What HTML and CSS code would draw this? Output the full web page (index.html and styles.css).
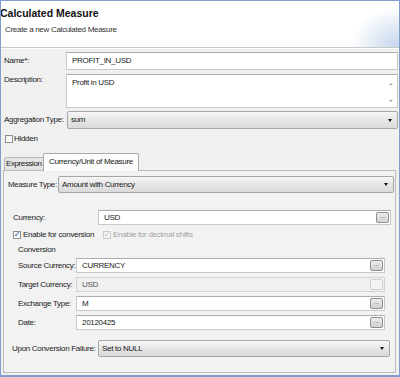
FILE: index.html
```html
<!DOCTYPE html>
<html>
<head>
<meta charset="utf-8">
<link rel="stylesheet" href="styles.css">
</head>
<body>
<div class="frame">
  <header class="banner">
    <h1 class="title">Calculated Measure</h1>
    <p class="subtitle">Create a new Calculated Measure</p>
  </header>
  <div class="content">
    <div class="field">
      <span class="lbl">Name*:</span>
      <div class="input h18">PROFIT_IN_USD</div>
    </div>
    <div class="field top gap4">
      <span class="lbl desc-lbl">Description:</span>
      <div class="input textarea">
        <span class="ta-text">Profit in USD</span>
        <span class="vscroll"><i class="up"></i><i class="down"></i></span>
      </div>
    </div>
    <div class="field gap3">
      <span class="lbl">Aggregation Type:</span>
      <div class="combo h18 agg">sum<i class="arrow"></i></div>
    </div>
    <div class="check-row hidden-row"><span class="cb"></span><span>Hidden</span></div>

    <div class="tabs">
      <div class="tab">Expression</div>
      <div class="tab active">Currency/Unit of Measure</div>
    </div>
    <div class="panel">
      <div class="field">
        <span class="lbl mt-lbl">Measure Type:</span>
        <div class="combo h17">Amount with Currency<i class="arrow"></i></div>
      </div>
      <div class="section">
        <div class="field">
          <span class="lbl cur-lbl">Currency:</span>
          <div class="input h15">USD<span class="btn">...</span></div>
        </div>
        <div class="check-row enable-row">
          <span class="check-item first"><span class="cb checked">✓</span><span>Enable for conversion</span></span>
          <span class="check-item disabled"><span class="cb checked">✓</span><span>Enable for decimal shifts</span></span>
        </div>
        <div class="group">
          <div class="group-title">Conversion</div>
          <div class="field">
            <span class="lbl g-lbl">Source Currency:</span>
            <div class="input h15">CURRENCY<span class="btn">...</span></div>
          </div>
          <div class="field gap4">
            <span class="lbl g-lbl">Target Currency:</span>
            <div class="input h15 disabled-input">USD<span class="btn off"></span></div>
          </div>
          <div class="field gap4">
            <span class="lbl g-lbl">Exchange Type:</span>
            <div class="input h15">M<span class="btn">...</span></div>
          </div>
          <div class="field gap4">
            <span class="lbl g-lbl">Date:</span>
            <div class="input h15">20120425<span class="btn">...</span></div>
          </div>
        </div>
      </div>
      <div class="field fail-row">
        <span class="lbl fail-lbl">Upon Conversion Failure:</span>
        <div class="combo h17">Set to NULL<i class="arrow"></i></div>
      </div>
    </div>
  </div>
</div>
</body>
</html>
```

FILE: styles.css
```css
* { box-sizing: border-box; }
body {
  margin: 0;
  font-family: "Liberation Sans", Arial, sans-serif;
  font-size: 8px;
  letter-spacing: -0.3px;
  color: #1a1a1a;
  background: #fff;
}
.frame {
  width: 400px;
  height: 377px;
  border: 1px solid #7d9fca;
  border-bottom-width: 2px;
  background: #f0f0f0;
  display: flex;
  flex-direction: column;
  overflow: hidden;
}
.banner {
  height: 47px;
  flex: none;
  padding-top: 6px;
  background: radial-gradient(ellipse 48px 40px at 100% 100%, #c4d5ec 0%, rgba(255,255,255,0) 100%), #fff;
  border-bottom: 1px solid #c8c8c8;
  box-shadow: 0 1px 0 #fff;
}
.title {
  margin: 0 0 0 -1px;
  font-size: 10.5px;
  line-height: 12px;
  font-weight: bold;
  letter-spacing: 0;
  color: #111;
}
.subtitle {
  margin: 6px 0 0 4px;
  line-height: 10px;
  color: #333;
}
.content {
  flex: 1;
  display: flex;
  flex-direction: column;
  padding: 4px 1px 0 3px;
  min-height: 0;
}
.field {
  display: flex;
  align-items: center;
  flex: none;
}
.field.top { align-items: flex-start; }
.gap4 { margin-top: 4px; }
.gap3 { margin-top: 3px; }
.lbl {
  width: 62px;
  flex: none;
  line-height: 10px;
  white-space: nowrap;
}
.desc-lbl { margin-top: 1px; }
.input {
  flex: 1;
  display: flex;
  align-items: center;
  background: #fff;
  border: 1px solid #c9c9c9;
  border-top-color: #acacac;
  padding: 0 1px 0 5px;
  line-height: 10px;
  white-space: nowrap;
}
.h18 { height: 18px; }
.h17 { height: 17px; }
.h15 { height: 15px; }
.textarea {
  height: 34px;
  align-items: stretch;
  padding: 2px 1px 0 5px;
}
.ta-text { flex: 1; line-height: 11px; }
.vscroll {
  width: 11px;
  display: flex;
  flex-direction: column;
  justify-content: space-between;
  align-items: center;
  padding: 6px 0 5px;
}
.vscroll i {
  width: 0; height: 0;
  border-left: 2px solid transparent;
  border-right: 2px solid transparent;
}
.vscroll .up { border-bottom: 2px solid #a2a2a2; }
.vscroll .down { border-top: 2px solid #a2a2a2; }
.combo {
  flex: 1;
  display: flex;
  align-items: center;
  padding: 0 5px 0 3px;
  background: linear-gradient(#f6f6f6, #e6e6e6 50%, #dadada);
  border: 1px solid #a6a6a6;
  border-radius: 2px;
  line-height: 10px;
  white-space: nowrap;
}
.combo.agg { margin-left: 1px; }
.arrow {
  margin-left: auto;
  width: 0; height: 0;
  border-left: 2.5px solid transparent;
  border-right: 2.5px solid transparent;
  border-top: 3px solid #111;
}
.check-row {
  display: flex;
  align-items: center;
  flex: none;
  line-height: 10px;
  white-space: nowrap;
}
.hidden-row { margin-top: 3px; height: 13px; padding-left: 1px; }
.cb {
  width: 8px;
  height: 8px;
  flex: none;
  border: 1px solid #8e8f8f;
  background: linear-gradient(#f2f2f2, #fff);
  margin-right: 1px;
  display: flex;
  align-items: center;
  justify-content: center;
  font-size: 8px;
  font-weight: bold;
  letter-spacing: 0;
  line-height: 8px;
  color: #2b4f9b;
  font-family: "DejaVu Sans", sans-serif;
}
.tabs {
  margin-top: 7px;
  height: 18px;
  flex: none;
  display: flex;
  align-items: flex-end;
  position: relative;
  z-index: 1;
}
.tab {
  height: 13px;
  width: 40px;
  padding-left: 1px;
  line-height: 11px;
  letter-spacing: -0.4px;
  background: #e4e4e4;
  border: 1px solid #b8b8b8;
  border-bottom: none;
  border-radius: 2px 0 0 0;
  white-space: nowrap;
  overflow: hidden;
}
.tab.active {
  height: 18px;
  width: 96px;
  margin-left: -1px;
  margin-bottom: -1px;
  padding-left: 5px;
  padding-top: 3px;
  line-height: 10px;
  letter-spacing: -0.3px;
  background: #fcfcfc;
  border-color: #aaaaaa;
  border-radius: 2px 2px 0 0;
}
.panel {
  flex: 1;
  margin: 0 2px 2px -1px;
  border: 1px solid #bcbcbc;
  background: #f2f2f2;
  padding: 5px 1px 0 4px;
  display: flex;
  flex-direction: column;
}
.mt-lbl { width: 50px; }
.section {
  margin-top: 17px;
  padding: 0 3px 0 5px;
}
.cur-lbl { width: 85px; }
.btn {
  margin-left: auto;
  width: 13px;
  height: 11px;
  flex: none;
  border: 1px solid #8f8f8f;
  border-radius: 2px;
  background: linear-gradient(#ececec, #d2d2d2);
  font-size: 6px;
  line-height: 7px;
  letter-spacing: 0;
  text-align: center;
  color: #333;
}
.btn.off {
  border-color: #d0d0d0;
  background: #f4f4f4;
}
.enable-row { margin-top: 5px; height: 10px; }
.check-item { display: flex; align-items: center; }
.check-item.first { width: 90px; }
.check-item .cb { margin-right: 2px; }
.check-item.disabled { color: #a3a3a3; }
.check-item.disabled .cb { border-color: #cacaca; color: #c2c2c2; background: #f4f4f4; }
.group {
  margin: 5px 6px 0 5px;
}
.group-title { line-height: 10px; height: 10px; margin-bottom: 3px; }
.g-lbl { width: 58px; }
.disabled-input {
  background: #f0f0f0;
  border-color: #d3d3d3;
  color: #555;
}
.fail-row {
  margin: 10px 4px 0 4px;
}
.fail-lbl { width: 86px; }
```
